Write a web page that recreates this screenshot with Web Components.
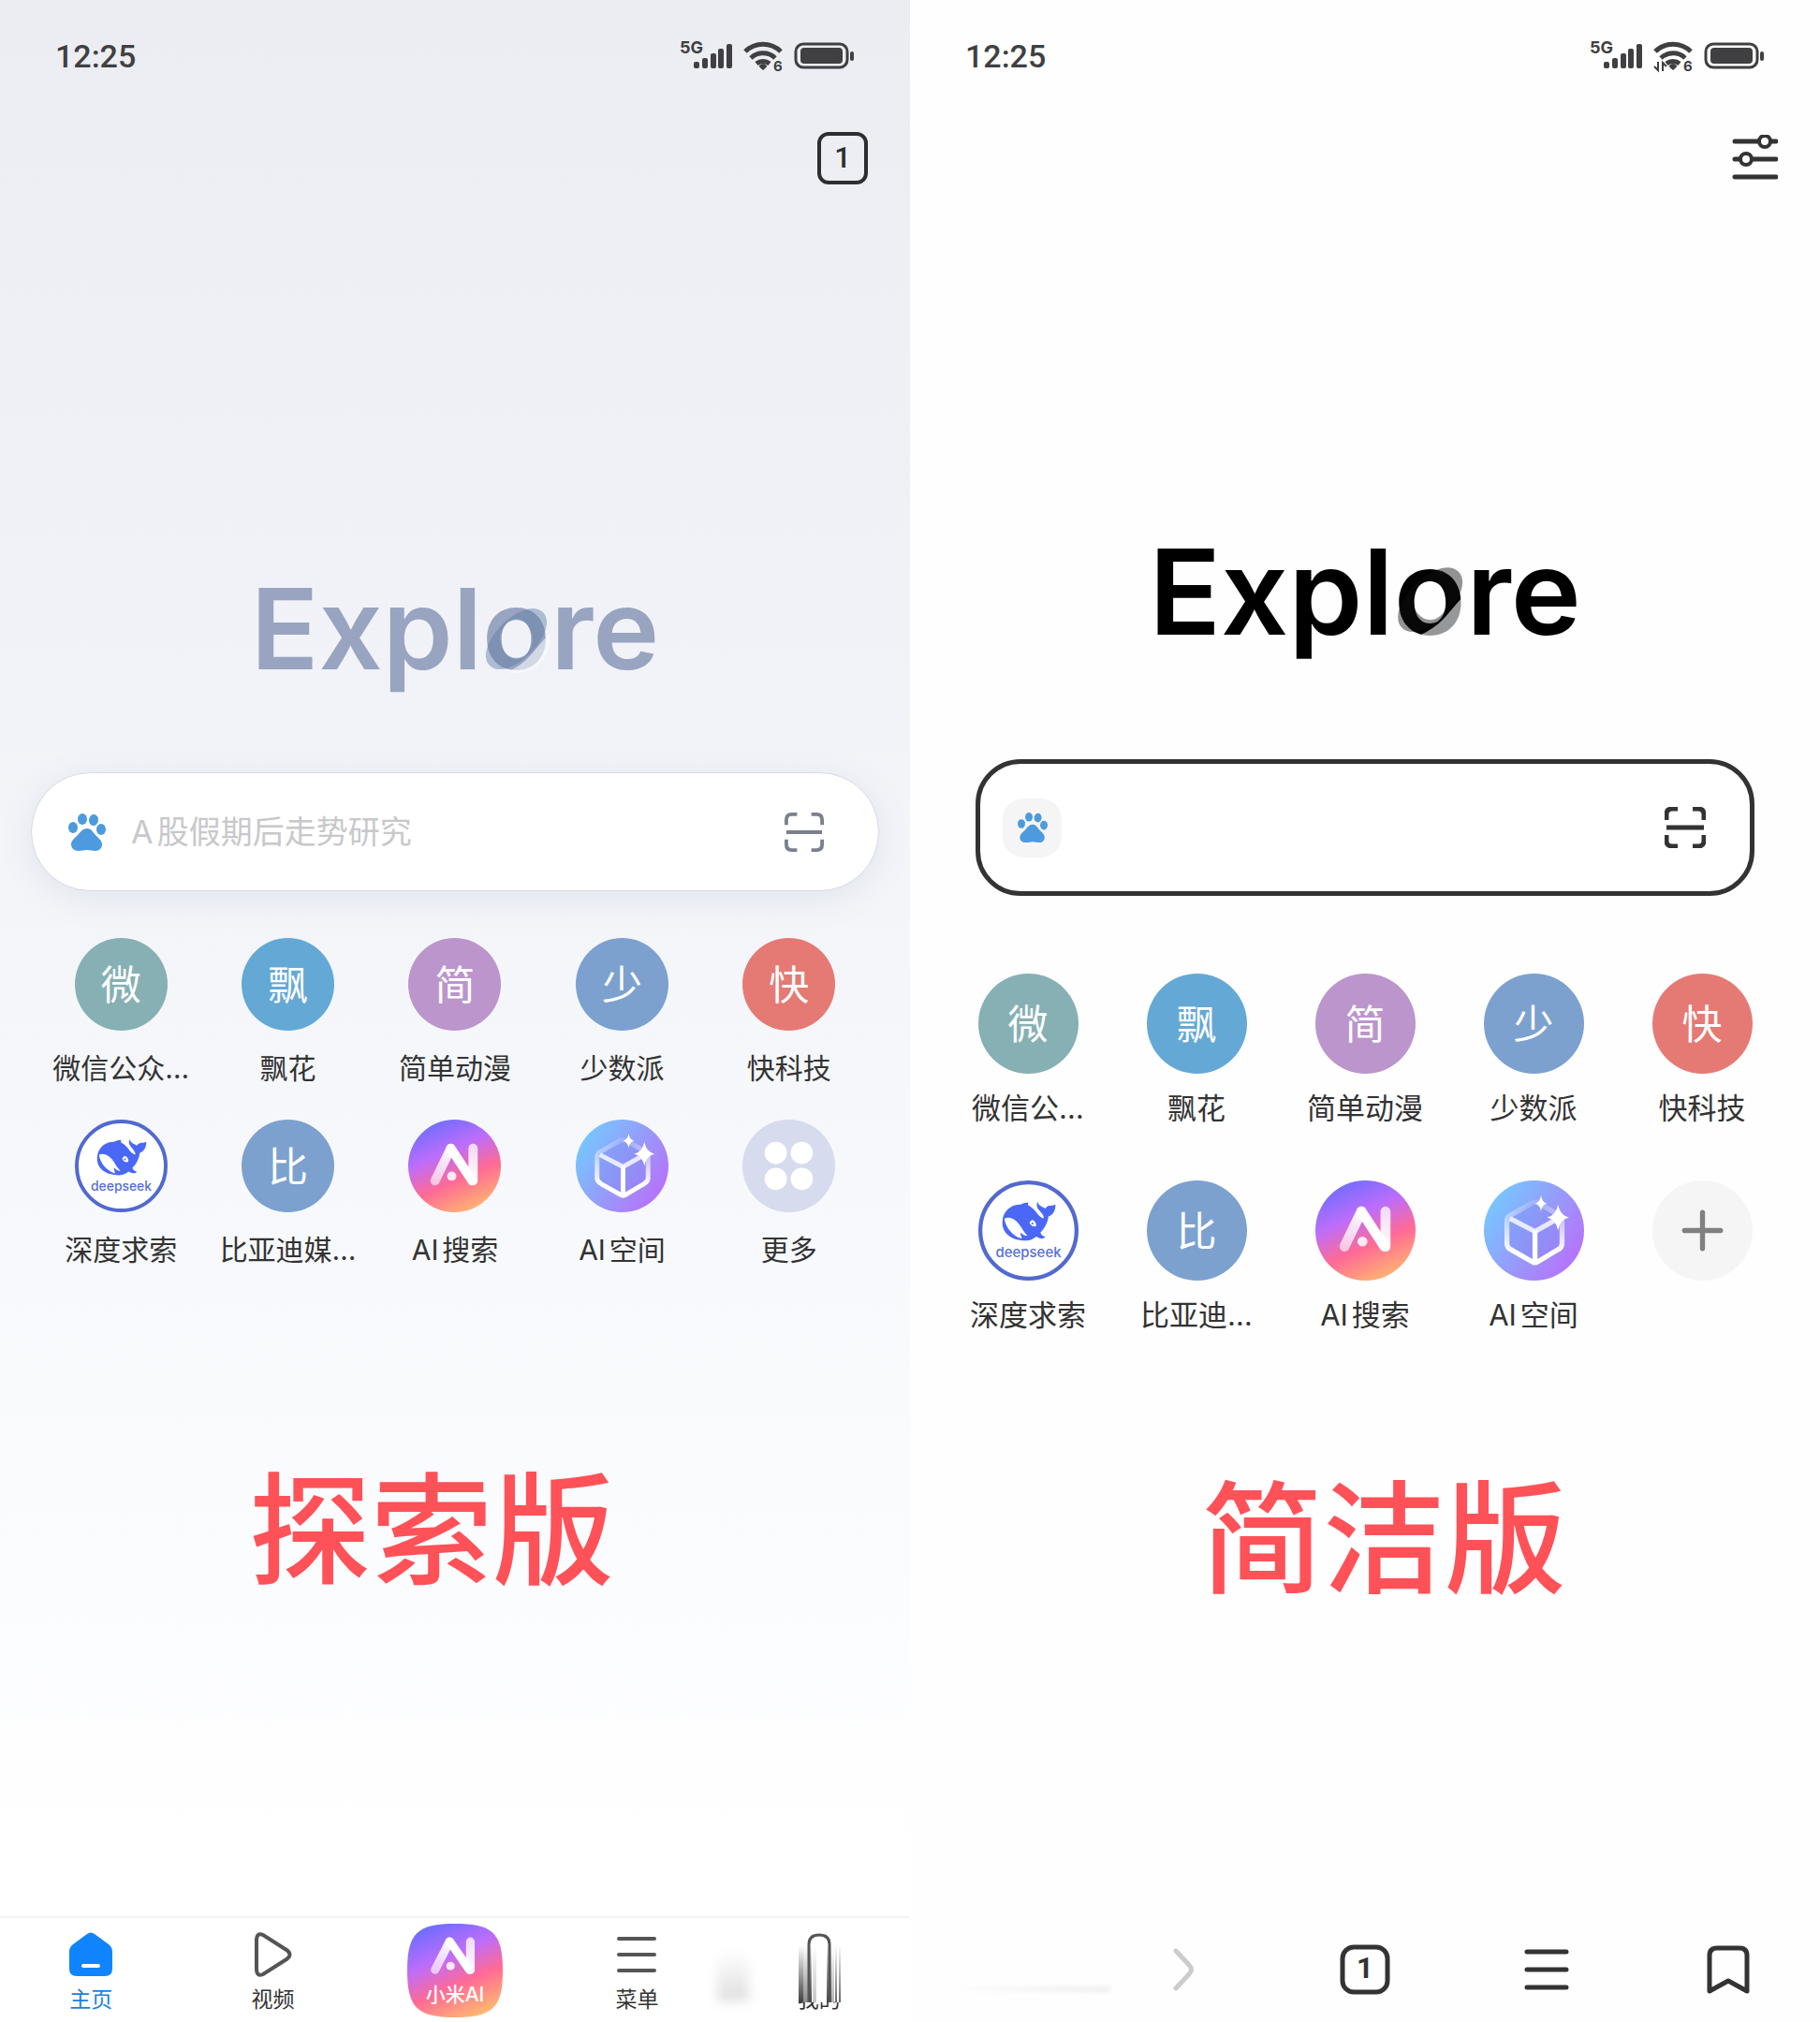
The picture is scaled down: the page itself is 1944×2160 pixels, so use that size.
<!DOCTYPE html>
<html lang="zh-CN">
<head>
<meta charset="utf-8">
<meta name="viewport" content="width=device-width, initial-scale=1">
<title>Explore</title>
<style>
  body {
    margin: 0;
    display: flex;
    min-height: 100vh;
    background: #fefefe;
    color: #333;
    font-family: Inter, "Noto Sans CJK SC", sans-serif;
    text-autospace: normal;
  }
</style>
</head>
<body>

<phone-screen theme="explore">
  <status-bar slot="status"></status-bar>
  <tool-button slot="tools" icon="tab" label="标签页">1</tool-button>
  <brand-logo></brand-logo>
  <search-box hint="A股假期后走势研究"></search-box>
  <app-grid>
    <app-tile name="微信公众…" color="#86b0b3">微</app-tile>
    <app-tile name="飘花" color="#64a8d6">飘</app-tile>
    <app-tile name="简单动漫" color="#bb95cc">简</app-tile>
    <app-tile name="少数派" color="#7ca1cf">少</app-tile>
    <app-tile name="快科技" color="#e57a74">快</app-tile>
    <app-tile name="深度求索" icon="deepseek"></app-tile>
    <app-tile name="比亚迪媒…" color="#7ca1cf">比</app-tile>
    <app-tile name="AI搜索" icon="ai"></app-tile>
    <app-tile name="AI空间" icon="cube"></app-tile>
    <app-tile name="更多" icon="more"></app-tile>
  </app-grid>
  <edition-title>探索版</edition-title>
  <nav-item slot="nav" icon="home" active>主页</nav-item>
  <nav-item slot="nav" icon="video">视频</nav-item>
  <nav-item slot="nav" icon="assistant">小米AI</nav-item>
  <nav-item slot="nav" icon="menu">菜单</nav-item>
  <nav-item slot="nav" icon="me">我的</nav-item>
</phone-screen>

<phone-screen theme="simple">
  <status-bar slot="status" traffic></status-bar>
  <tool-button slot="tools" icon="sliders" label="设置"></tool-button>
  <brand-logo></brand-logo>
  <search-box boxed></search-box>
  <app-grid>
    <app-tile name="微信公…" color="#86b0b3">微</app-tile>
    <app-tile name="飘花" color="#64a8d6">飘</app-tile>
    <app-tile name="简单动漫" color="#bb95cc">简</app-tile>
    <app-tile name="少数派" color="#7ca1cf">少</app-tile>
    <app-tile name="快科技" color="#e57a74">快</app-tile>
    <app-tile name="深度求索" icon="deepseek"></app-tile>
    <app-tile name="比亚迪…" color="#7ca1cf">比</app-tile>
    <app-tile name="AI搜索" icon="ai"></app-tile>
    <app-tile name="AI空间" icon="cube"></app-tile>
    <app-tile icon="plus"></app-tile>
  </app-grid>
  <edition-title>简洁版</edition-title>
  <nav-item slot="nav" icon="blank"></nav-item>
  <nav-item slot="nav" icon="forward"></nav-item>
  <nav-item slot="nav" icon="tabs"></nav-item>
  <nav-item slot="nav" icon="lines"></nav-item>
  <nav-item slot="nav" icon="bookmark"></nav-item>
</phone-screen>

<script>
// the "AI" mark, shared by the search tile and the assistant button
const aiMark = `
  <defs>
    <linearGradient id="leg" gradientUnits="userSpaceOnUse" x1="46" y1="28" x2="28" y2="70">
      <stop offset="0" stop-color="#fff"/><stop offset="1" stop-color="#fff" stop-opacity=".6"/>
    </linearGradient>
    <linearGradient id="bar" gradientUnits="userSpaceOnUse" x1="0" y1="28" x2="0" y2="70">
      <stop offset="0" stop-color="#fff" stop-opacity=".75"/><stop offset="1" stop-color="#fff"/>
    </linearGradient>
  </defs>
  <path d="M70 31V66" stroke="url(#bar)"/>
  <path d="M46 31L29 66" stroke="url(#leg)"/>
  <path d="M46 31L69 66" stroke="#fff"/>
  <circle cx="47" cy="61" r="5" fill="#fff" fill-opacity=".85" stroke="none"/>`;

const aiFill = `
  <linearGradient id="bg" x1=".25" y1="0" x2=".7" y2="1">
    <stop offset="0" stop-color="#6b6dff"/><stop offset=".35" stop-color="#bd6dfb"/>
    <stop offset=".65" stop-color="#ff6a95"/><stop offset="1" stop-color="#ffb870"/>
  </linearGradient>`;

const paw = `<svg viewBox="0 0 40 40" fill="#4d9ade">
  <ellipse cx="5" cy="15" rx="5" ry="6"/><ellipse cx="15" cy="6" rx="5" ry="6"/>
  <ellipse cx="27" cy="7" rx="5" ry="6" transform="rotate(8 27 7)"/><ellipse cx="35" cy="17" rx="5" ry="6"/>
  <path d="M20 16c5 0 6 4 9 7s7 6 7 10-3 7-7 7c-4 0-5-1-9-1s-6 1-9 1c-5 0-8-3-8-7s4-7 7-10 5-7 10-7z"/>
</svg>`;

const scan = `<svg viewBox="0 0 44 44" fill="none" stroke="currentColor">
  <path d="M2 14V8q0-6 6-6h6M30 2h6q6 0 6 6v6M42 30v6q0 6-6 6h-6M14 42H8q-6 0-6-6v-6M2 22H42"/>
</svg>`;

const tileArt = {
  deepseek: `<svg viewBox="0 0 100 100">
    <circle cx="50" cy="50" r="48" fill="#fff" stroke="#5269cf" stroke-width="4"/>
    <path fill="#4a68f5" d="M24 42C24 31 32 24 42 24q4-2 8-2-1 2 0 3c7 3 9 11 15 13 1-3-2-5-4-8-3-3-3-6-2-9 1 4 4 5 8 7 2-4 6-2 10-4 0 6-2 10-7 12-1 7-4 12-8 16 1 3 3 4 5 4-2 3-6 2-9 0-3 2-6 4-10 4C33 60 24 53 24 42z"/>
    <path fill="#fff" d="M26 38c6-3 13 2 17 9 2 4 4 6 6 8-3 1-5-2-7-3 0 3 2 5 1 6-8-2-16-11-17-20z"/>
    <path fill="#fff" d="M51 42q3-5 6 0 2 4-1 4t-4-2z"/><circle cx="54" cy="43" r="1" fill="#4a68f5"/>
    <text x="50" y="77" text-anchor="middle" font-size="14" font-weight="500" fill="#556fd6">deepseek</text>
  </svg>`,
  ai: `<svg viewBox="0 0 100 100">${aiFill}
    <circle cx="50" cy="50" r="50" fill="url(#bg)"/>
    <g stroke-width="10" stroke-linecap="round" fill="none">${aiMark}</g>
  </svg>`,
  cube: `<svg viewBox="0 0 100 100">
    <linearGradient id="bg" x1="0" y1=".2" x2="1" y2=".85">
      <stop offset="0" stop-color="#73cbff"/><stop offset=".5" stop-color="#969bfa"/><stop offset="1" stop-color="#bd6afb"/>
    </linearGradient>
    <linearGradient id="edge" gradientUnits="userSpaceOnUse" x1="50" y1="20" x2="50" y2="72">
      <stop offset="0" stop-color="#fff" stop-opacity=".15"/><stop offset="1" stop-color="#fff"/>
    </linearGradient>
    <circle cx="50" cy="50" r="50" fill="url(#bg)"/>
    <path d="M28 34L47 23q4-2 8 0L74 34q4 2 4 6V63q0 4-4 6L54 81q-3 2-6 0L27 69q-4-2-4-6V40q0-4 5-6z" fill="#7f86f0" fill-opacity=".35" stroke="url(#edge)" stroke-width="5"/>
    <path d="M26 38L51 51L74 38" fill="none" stroke="#fff" stroke-opacity=".8" stroke-width="5"/>
    <path d="M51 50V80" stroke="#fff" stroke-width="5"/>
    <path fill="#fff" d="M57 15q1 7 6 8-5 1-6 8-1-7-6-8 5-1 6-8zM74 24q2 11 11 13-9 2-11 13-2-11-11-13 9-2 11-13z"/>
  </svg>`,
  more: `<svg viewBox="0 0 100 100"><circle cx="50" cy="50" r="50" fill="#d6dced"/>
    <g fill="#fff"><circle cx="36" cy="36" r="12"/><circle cx="64" cy="36" r="12"/><circle cx="36" cy="64" r="12"/><circle cx="64" cy="64" r="12"/></g>
  </svg>`,
  plus: `<svg viewBox="0 0 100 100"><circle cx="50" cy="50" r="50" fill="#f5f5f5"/>
    <path d="M32 50H68M50 32V68" stroke="#808080" stroke-width="5" stroke-linecap="round"/>
  </svg>`
};

const navArt = {
  home: `<svg viewBox="0 0 48 48"><path fill="#0f84fd" d="M20 2q4-3 8 0L43 13q4 3 4 8V39q0 8-8 8H9q-8 0-8-8V21q0-5 4-8z"/>
    <path d="M16 36H32" stroke="#fff" stroke-width="4" stroke-linecap="round"/></svg>`,
  video: `<svg viewBox="0 0 48 48" fill="none" stroke="#555" stroke-width="4"><path d="M6 39V9Q6 0 13 3L38 19q7 5 0 10L13 45Q6 48 6 39z"/></svg>`,
  menu: `<svg viewBox="0 0 48 48" stroke="#555" stroke-width="4" stroke-linecap="round"><path d="M5 7H43M5 24H43M5 41H43"/></svg>`,
  me: `<svg viewBox="0 0 48 88">
    <defs>
      <linearGradient id="fade" gradientUnits="userSpaceOnUse" x1="0" y1="14" x2="0" y2="76">
        <stop offset="0" stop-color="#333" stop-opacity="0"/><stop offset="1" stop-color="#333" stop-opacity=".95"/>
      </linearGradient>
    </defs>
    <path d="M0 52H48V75H0z" fill="#fff"/>
    <g fill="url(#fade)">
      <path d="M2 14h5v61H2z"/><path d="M7 14h5v61H7z" opacity=".6"/>
      <path d="M12 14h4v61h-4z"/><path d="M17 14h4v61h-4z" opacity=".3"/>
      <path d="M32 14h5v61h-5z"/><path d="M37 14h3v61h-3z" opacity=".4"/>
      <path d="M41 14h2v61h-2zM45 14h2v61h-2z" opacity=".8"/>
    </g>
    <path d="M13 75V13Q13 3 24 3T35 13V75" fill="none" stroke="#555" stroke-width="3"/>
  </svg>`,
  assistant: `<svg viewBox="0 0 102 100">${aiFill}
    <path fill="url(#bg)" d="M51 0C91 0 102 10 102 50S91 100 51 100 0 90 0 50 11 0 51 0z"/>
    <g transform="translate(3 -8) scale(.92 .87)" stroke-width="10" stroke-linecap="round" fill="none">${aiMark}</g>
  </svg>`,
  forward: `<svg viewBox="0 0 54 54" fill="none" stroke="#ccc" stroke-width="5" stroke-linecap="round"><path d="M19 7L33 22q5 5 0 10L19 47"/></svg>`,
  tabs: `<svg viewBox="0 0 54 54"><rect x="3" y="3" width="48" height="48" rx="12" fill="none" stroke="#333" stroke-width="5"/>
    <text x="27" y="36" text-anchor="middle" font-family="Roboto, sans-serif" font-size="31" font-weight="700" fill="#333">1</text></svg>`,
  lines: `<svg viewBox="0 0 54 54" stroke="#333" stroke-width="5" stroke-linecap="round"><path d="M6 8H48M6 27H48M6 46H48"/></svg>`,
  bookmark: `<svg viewBox="0 0 54 54" fill="none" stroke="#333" stroke-width="5" stroke-linejoin="round"><path d="M6 50V12q0-8 8-8H38q8 0 8 8V50L26 39z"/></svg>`,
  blank: ""
};

const toolArt = {
  sliders: `<svg viewBox="0 0 50 50" width="50" height="50" fill="#fefefe" stroke="#333" stroke-width="5" stroke-linecap="round">
    <path d="M4 7H48M4 26H48M4 45H48"/><circle cx="36" cy="7" r="6" stroke-width="4"/><circle cx="16" cy="26" r="6" stroke-width="4"/>
  </svg>`
};

class BaseElement extends HTMLElement {
  connectedCallback() {
    if (this.shadowRoot) return;
    this.attachShadow({ mode: "open" }).innerHTML = this.render();
  }

  attr(name) {
    return this.getAttribute(name) || "";
  }
}

class PhoneScreen extends BaseElement {
  render() {
    return `
      <style>
        :host {
          flex: 1;
          min-width: 0;
          display: flex;
          flex-direction: column;
          position: relative;
          --logo-size: 120px;
          --logo-color: #98a4c0;
          --ring-color: #5d7aa3;
          --disc: 99px;
          --label: 30px;
          --label-gap: 20px;
          --row-gap: 35px;
          --grid-top: 50px;
          --grid-pad: 40px;
          --title-top: 190px;
          --title-pad: 0 50px 0 0;
          --logo-top: 405px;
          --search-top: 83px;
        }
        :host([theme="explore"]) {
          background: linear-gradient(#ecedf2, #f1f3f8 35%, #f7f9fc 62%, #fbfcfe 78%, #fff 92%);
        }
        :host([theme="simple"]) {
          --logo-size: 127px;
          --logo-color: #000;
          --ring-color: #111;
          --disc: 107px;
          --label: 31px;
          --label-gap: 17px;
          --row-gap: 57px;
          --grid-top: 83px;
          --grid-pad: 36px;
          --title-top: 129px;
          --title-pad: 0 0 0 40px;
          --logo-top: 365px;
          --search-top: 109px;
        }
        .tools {
          display: flex;
          justify-content: flex-end;
          height: 56px;
          margin-top: 45px;
          padding: 0 45px;
        }
        nav {
          display: grid;
          grid-template-columns: repeat(5, 1fr);
          height: 113px;
          margin-top: auto;
          align-items: center;
          position: relative;
        }
        :host([theme="explore"]) nav {
          border-top: 2px solid #f4f4f5;
          height: 111px;
        }
        .smudge {
          position: absolute;
          right: 172px;
          bottom: 22px;
          width: 34px;
          height: 54px;
          background: linear-gradient(transparent, #dedede);
          filter: blur(6px);
        }
        .streak {
          position: absolute;
          left: 40px;
          bottom: 32px;
          width: 174px;
          height: 6px;
          background: linear-gradient(90deg, transparent, #eee);
          filter: blur(2px);
        }
      </style>
      <slot name="status"></slot>
      <div class="tools"><slot name="tools"></slot></div>
      <slot></slot>
      <nav>
        <slot name="nav"></slot>
        <div class="${this.attr("theme") === "explore" ? "smudge" : "streak"}"></div>
      </nav>`;
  }
}

class StatusBar extends BaseElement {
  render() {
    const arrows = this.hasAttribute("traffic")
      ? `<path d="M74 24V33L70 29M79 34V25L83 29" fill="none" stroke-width="2" stroke="currentColor"/>`
      : "";
    return `
      <style>
        :host {
          display: flex;
          align-items: center;
          justify-content: space-between;
          height: 72px;
          margin-top: 24px;
          padding: 0 57px 0 59px;
          color: #404042;
        }
        time {
          font: 500 34px/40px Roboto, sans-serif;
        }
      </style>
      <time>12:25</time>
      <svg width="190" height="56" viewBox="0 -10 190 56" fill="currentColor" font-family="Inter, sans-serif" font-weight="700">
        <text x="1" y="15" font-size="18">5G</text>
        <rect x="16" y="24" width="6" height="7" rx="2"/><rect x="25" y="20" width="6" height="11" rx="2"/>
        <rect x="34" y="15" width="6" height="16" rx="2"/><rect x="42" y="10" width="6" height="21" rx="2"/>
        <rect x="51" y="5" width="6" height="26" rx="2"/>
        <path d="M71 13A27 27 0 0 1 109 13M77 20A19 19 0 0 1 103 20M83 26A11 11 0 0 1 97 26" fill="none" stroke="currentColor" stroke-width="5"/>
        <path d="M86 28q4-4 8 0 1 1-4 5-5-4-4-5z"/>
        ${arrows}
        <text x="101" y="34" font-size="15">6</text>
        <rect x="125" y="5" width="55" height="25" rx="8" fill="none" stroke="currentColor" stroke-width="3"/>
        <rect x="130" y="9" width="45" height="17" rx="4"/>
        <rect x="183" y="13" width="4" height="10" rx="2"/>
      </svg>`;
  }
}

class ToolButton extends BaseElement {
  render() {
    const icon = this.attr("icon");
    return `
      <style>
        :host { display: flex; align-items: center; }
        button {
          display: grid;
          place-items: center;
          padding: 0;
          border: 0;
          background: none;
          color: #2c2e31;
          font: 500 31px/40px Roboto, sans-serif;
        }
        .tab {
          width: 54px;
          height: 56px;
          border: 4px solid #2c2e31;
          border-radius: 12px;
        }
      </style>
      <button class="${icon}" aria-label="${this.attr("label")}">${toolArt[icon] || ""}<slot></slot></button>`;
  }
}

class BrandLogo extends BaseElement {
  render() {
    return `
      <style>
        :host {
          display: block;
          margin-top: var(--logo-top);
          text-align: center;
          color: var(--logo-color);
        }
        h1 {
          margin: 0;
          font-weight: 600;
          font-size: var(--logo-size);
          line-height: 140px;
        }
        span {
          display: inline-block;
          position: relative;
        }
        /* tilted ring laid over the letter o */
        svg {
          position: absolute;
          left: 0;
          bottom: 23px;
          width: 100%;
          overflow: visible;
        }
      </style>
      <h1>Expl<span>o<svg viewBox="0 0 72 72">
        <path d="M71 30A36 36 0 0 1 26 71Q42 64 52 52T71 30z" fill="#fafbfd" fill-opacity=".6"/>
        <path d="M8 64C-2 54 8 34 21 21S54-2 64 8 64 38 51 51 18 74 8 64zM36 16a17 20 0 1 0 0 40a17 20 0 1 0 0-40z" fill="var(--ring-color)" fill-opacity=".45" fill-rule="evenodd"/>
      </svg></span>re</h1>`;
  }
}

class SearchBox extends BaseElement {
  render() {
    return `
      <style>
        :host { display: block; margin-top: var(--search-top); }
        form {
          box-sizing: border-box;
          display: flex;
          align-items: center;
          gap: 27px;
          height: 127px;
          margin: 0 33px;
          padding: 0 58px 0 39px;
          border: 1px solid #d8dae0;
          border-radius: 64px;
          background: #fff;
          box-shadow: 0 8px 36px rgba(110, 115, 160, .12);
          color: #7b808b;
        }
        button {
          display: grid;
          place-items: center;
          padding: 0;
          border: 0;
          background: none;
          color: inherit;
        }
        svg { display: block; width: 40px; height: 40px; }
        .scan svg { width: 42px; height: 42px; stroke-width: 4px; }
        input {
          flex: 1;
          min-width: 0;
          padding: 0;
          border: 0;
          outline: 0;
          background: none;
          color: #333;
          font: 34px/48px Inter, "Noto Sans CJK SC", sans-serif;
        }
        input::placeholder { color: #c8c8ca; opacity: 1; }
        :host([boxed]) form {
          height: 146px;
          margin: 0 70px;
          padding: 0 47px 0 24px;
          border: 5px solid #333;
          border-radius: 48px;
          box-shadow: none;
          color: #333;
        }
        :host([boxed]) .engine {
          width: 63px;
          height: 63px;
          border-radius: 22px;
          background: #f5f5f5;
        }
        :host([boxed]) .engine svg { width: 32px; height: 32px; }
        :host([boxed]) .scan svg { width: 44px; height: 44px; stroke-width: 5px; }
      </style>
      <form>
        <button type="button" class="engine" aria-label="搜索引擎">${paw}</button>
        <input type="text" aria-label="搜索" placeholder="${this.attr("hint")}">
        <button type="button" class="scan" aria-label="扫一扫">${scan}</button>
      </form>`;
  }
}

class AppGrid extends BaseElement {
  render() {
    return `
      <style>
        :host {
          display: grid;
          grid-template-columns: repeat(5, 1fr);
          row-gap: var(--row-gap);
          margin-top: var(--grid-top);
          padding: 0 var(--grid-pad);
        }
      </style>
      <slot></slot>`;
  }
}

class AppTile extends BaseElement {
  render() {
    const name = this.attr("name");
    return `
      <style>
        :host { display: block; min-width: 0; }
        a {
          display: flex;
          flex-direction: column;
          align-items: center;
          gap: var(--label-gap);
          color: #333;
          text-decoration: none;
        }
        .disc {
          display: grid;
          place-items: center;
          width: var(--disc);
          height: var(--disc);
          border-radius: 50%;
          background: ${this.attr("color") || "none"};
          color: #fff;
          font-size: 43px;
          line-height: 60px;
        }
        svg { display: block; width: var(--disc); height: var(--disc); }
        .name {
          font-size: var(--label);
          line-height: 40px;
          white-space: nowrap;
        }
      </style>
      <a href="#" aria-label="${name || "添加"}">
        <span class="disc">${tileArt[this.attr("icon")] || "<slot></slot>"}</span>
        ${name ? `<span class="name">${name}</span>` : ""}
      </a>`;
  }
}

class EditionTitle extends BaseElement {
  render() {
    return `
      <style>
        :host {
          display: block;
          margin-top: var(--title-top);
          padding: var(--title-pad);
          color: #ff5158;
          text-align: center;
        }
        h2 {
          margin: 0;
          font: 500 130px/160px "Noto Sans CJK SC", sans-serif;
        }
      </style>
      <h2><slot></slot></h2>`;
  }
}

class NavItem extends BaseElement {
  render() {
    const icon = this.attr("icon");
    if (icon === "blank") return "";
    return `
      <style>
        :host { display: flex; justify-content: center; }
        button {
          display: flex;
          flex-direction: column;
          align-items: center;
          gap: 8px;
          padding: 7px 0 0;
          border: 0;
          background: none;
          color: #333;
          font: 23px/32px Inter, "Noto Sans CJK SC", sans-serif;
        }
        svg { display: block; width: 48px; height: 48px; }
        .forward svg, .tabs svg, .lines svg, .bookmark svg { width: 54px; height: 54px; }
        .forward, .tabs, .lines, .bookmark, .assistant { padding: 0; }
        :host([active]) button { color: #1a7fe0; }
        .assistant, .me { display: grid; justify-items: center; gap: 0; }
        .assistant > *, .me > * { grid-area: 1 / 1; }
        .assistant svg { width: 102px; height: 100px; }
        .assistant span {
          align-self: end;
          padding-bottom: 8px;
          color: #fff;
          font-size: 21px;
          font-weight: 500;
          text-autospace: no-autospace;
        }
        .me svg { height: 88px; z-index: 1; }
        .me span { align-self: end; }
      </style>
      <button class="${icon}" aria-label="${this.textContent || icon}">
        ${navArt[icon]}
        ${this.textContent ? "<span><slot></slot></span>" : ""}
      </button>`;
  }
}

customElements.define("status-bar", StatusBar);
customElements.define("tool-button", ToolButton);
customElements.define("brand-logo", BrandLogo);
customElements.define("search-box", SearchBox);
customElements.define("app-tile", AppTile);
customElements.define("app-grid", AppGrid);
customElements.define("edition-title", EditionTitle);
customElements.define("nav-item", NavItem);
customElements.define("phone-screen", PhoneScreen);
</script>
</body>
</html>
